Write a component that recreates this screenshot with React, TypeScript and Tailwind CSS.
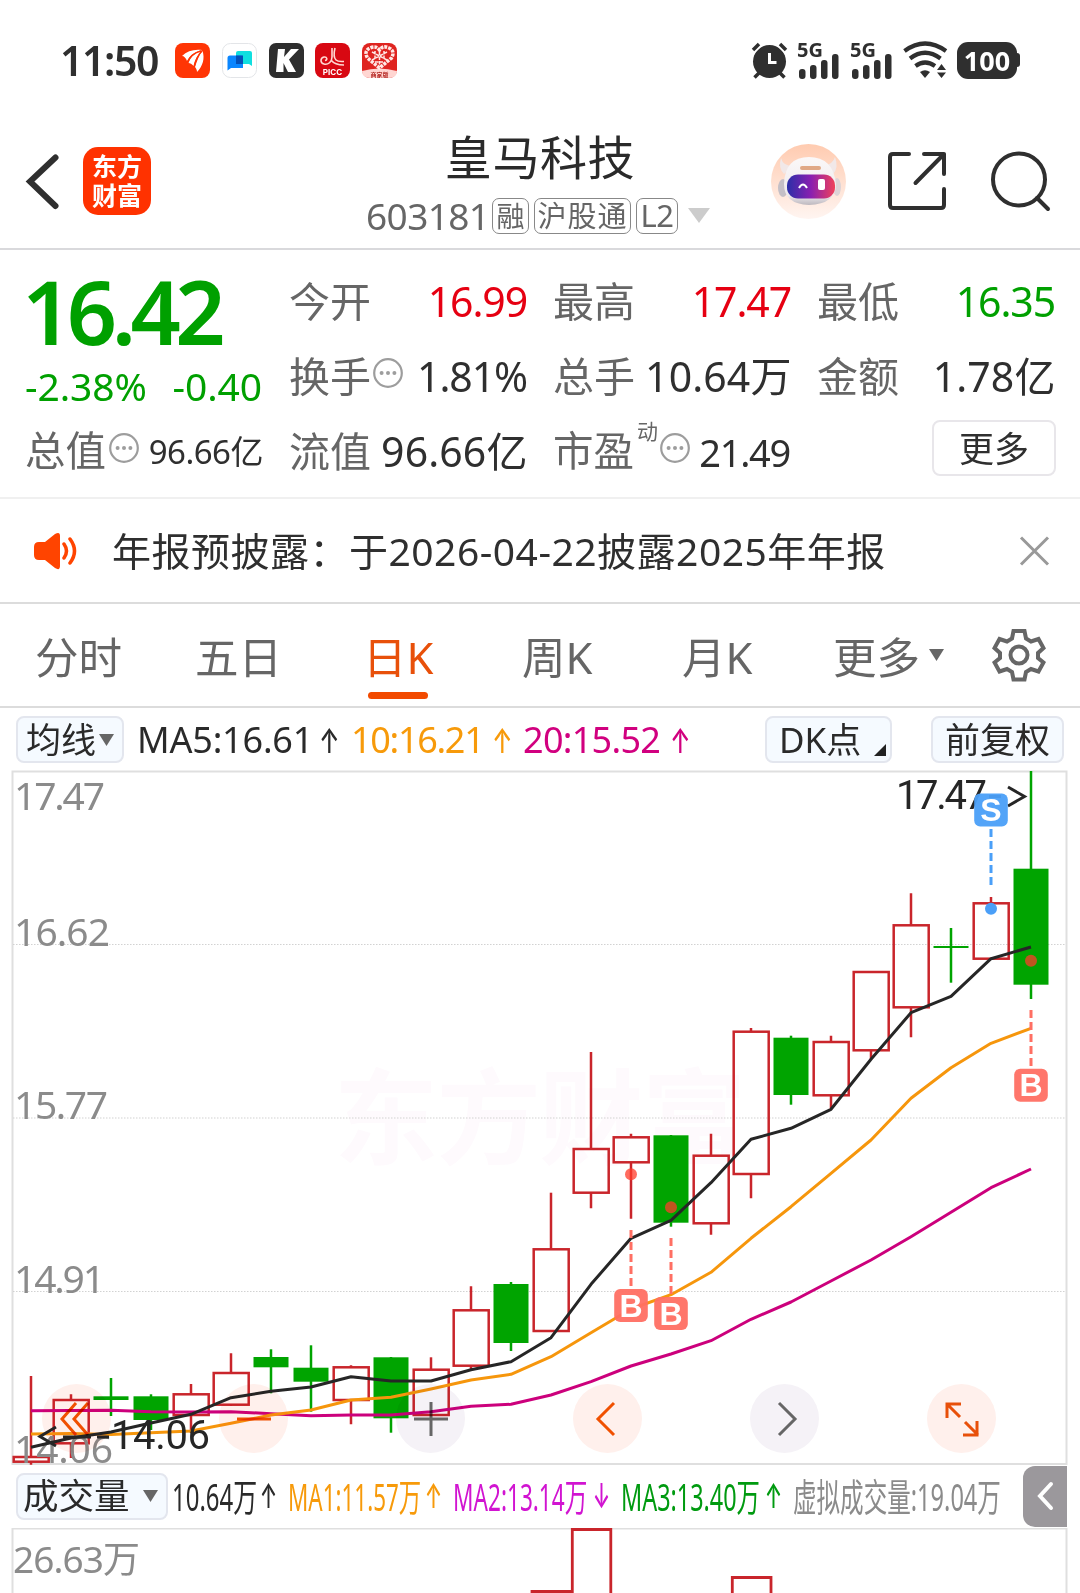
import React from 'react';

type Candle = { up: boolean; high: number; top: number; bottom: number; low: number };

const STEP = 40;
const FIRST_X = 31;

const candles: Candle[] = [
  { up: true, high: 1376, top: 1457, bottom: 1461.7, low: 1464.7 },
  { up: true, high: 1394.3, top: 1400, bottom: 1443.3, low: 1458 },
  { up: false, high: 1378, top: 1396.3, bottom: 1400, low: 1416 },
  { up: false, high: 1394.3, top: 1396.3, bottom: 1420, low: 1430 },
  { up: true, high: 1384, top: 1394.3, bottom: 1415, low: 1433 },
  { up: true, high: 1353.3, top: 1373, bottom: 1404.7, low: 1406 },
  { up: false, high: 1349.3, top: 1357, bottom: 1367.3, low: 1393.3 },
  { up: false, high: 1345.3, top: 1367.7, bottom: 1381.7, low: 1411.7 },
  { up: true, high: 1365.3, top: 1367.3, bottom: 1400, low: 1424.3 },
  { up: false, high: 1357, top: 1357.3, bottom: 1418.3, low: 1432.7 },
  { up: true, high: 1357.3, top: 1369.7, bottom: 1415, low: 1415 },
  { up: true, high: 1286.3, top: 1310.3, bottom: 1365.7, low: 1369 },
  { up: false, high: 1282, top: 1284, bottom: 1343, low: 1351 },
  { up: true, high: 1192.7, top: 1249.3, bottom: 1331, low: 1331 },
  { up: true, high: 1052, top: 1149, bottom: 1192.7, low: 1208.3 },
  { up: true, high: 1133.7, top: 1137.3, bottom: 1162.3, low: 1218.7 },
  { up: false, high: 1135, top: 1135.3, bottom: 1222.7, low: 1226.7 },
  { up: true, high: 1133.7, top: 1155.7, bottom: 1223.3, low: 1234.7 },
  { up: true, high: 1028, top: 1031.7, bottom: 1174, low: 1198.3 },
  { up: false, high: 1035.7, top: 1037.7, bottom: 1095, low: 1104.7 },
  { up: true, high: 1035.7, top: 1042, bottom: 1095.3, low: 1109 },
  { up: true, high: 972, top: 972, bottom: 1050.3, low: 1059 },
  { up: true, high: 893.3, top: 925.3, bottom: 1007.3, low: 1037.3 },
  { up: false, high: 928, top: 946, bottom: 948, low: 982.7 },
  { up: true, high: 897, top: 903.3, bottom: 958.7, low: 960 },
  { up: false, high: 771, top: 868.7, bottom: 984.7, low: 999 },
];

const ma5 = [1447.3, 1438, 1432, 1423, 1414.3, 1397.7, 1391.3, 1387, 1376.7, 1381, 1381, 1369.7, 1361.7, 1337.7, 1284.3, 1238.3, 1220.3, 1182.7, 1139.3, 1128.3, 1109.3, 1059.3, 1012.7, 996.3, 958.7, 947];
const ma10 = [1434, 1433.5, 1434.5, 1432.7, 1431, 1423.3, 1415, 1410, 1400, 1397.3, 1389, 1380, 1374.3, 1356.7, 1332.7, 1309, 1294.7, 1272.3, 1238.3, 1206.7, 1173.3, 1140, 1098.3, 1067.7, 1043.3, 1028.3];
const ma20 = [1410.7, 1410.5, 1410.3, 1411.7, 1412, 1411.7, 1413.7, 1415.7, 1415, 1415, 1411.7, 1406.3, 1404.3, 1395, 1381.7, 1366, 1354, 1340.7, 1319.3, 1302, 1281, 1260, 1236.7, 1212.3, 1187.7, 1169];

const toPoints = (values: number[]) => values.map((v, i) => `${FIRST_X + i * STEP},${v}`).join(' ');

const axisLabels = [
  { text: '17.47', y: 810, width: 91 },
  { text: '16.62', y: 946, width: 96 },
  { text: '15.77', y: 1119, width: 94 },
  { text: '14.91', y: 1293, width: 91 },
  { text: '14.06', y: 1463, width: 99 },
];

const signals = [
  { kind: 'S', x: 991, dot: 908.7, box: 793.5, from: 829, to: 886 },
  { kind: 'B', x: 631, dot: 1174.3, box: 1289, from: 1230, to: 1287 },
  { kind: 'B', x: 671, dot: 1207.3, box: 1297, from: 1238, to: 1295 },
  { kind: 'B', x: 1031, dot: 960.7, box: 1068.7, from: 1010, to: 1066 },
];

function Dots({ className = '' }: { className?: string }) {
  return (
    <svg width="30" height="30" viewBox="0 0 30 30" className={`shrink-0 ${className}`}>
      <circle cx="15" cy="15" r="13.8" fill="none" stroke="#9d9d9d" strokeWidth="2.2" />
      <circle cx="8.6" cy="15" r="2" fill="#9d9d9d" />
      <circle cx="15" cy="15" r="2" fill="#9d9d9d" />
      <circle cx="21.4" cy="15" r="2" fill="#9d9d9d" />
    </svg>
  );
}

function Down({ className = '' }: { className?: string }) {
  return (
    <svg width="15" height="12" viewBox="0 0 15 12" className={`shrink-0 ${className}`}>
      <path d="M0 0H15L7.5 12Z" fill="currentColor" />
    </svg>
  );
}

function SignalBars() {
  return (
    <div className="relative h-[37px] w-[43px]">
      <span className="absolute -top-[1px] left-0 text-[20px] leading-[18px] font-bold">5G</span>
      <svg width="43" height="37" viewBox="0 0 43 37" fill="#2f2f2f">
        <rect x="2" y="27" width="6.5" height="10" rx="3" />
        <rect x="13" y="23" width="6.5" height="14" rx="3" />
        <rect x="24" y="18" width="6.5" height="19" rx="3" />
        <rect x="35" y="12" width="6.5" height="25" rx="3" />
      </svg>
    </div>
  );
}

function StatusBar() {
  return (
    <div className="flex h-[122px] items-center pb-[2px] pl-[60px] text-[#2f2f2f]">
      <span className="w-[115px] text-[41px] leading-none font-semibold tracking-[-1.4px] whitespace-nowrap">11:50</span>
      <div className="flex w-[222px] justify-between">
        <svg width="35" height="35" viewBox="0 0 35 35">
          <rect width="35" height="35" rx="8" fill="#ff3505" />
          <path d="M7 13C12 8 19 6 27 7C20 9 15 12 12 18C11 15 9 13 7 13Z" fill="#fff" />
          <path d="M13.500 20C16 13 21 9 27 7.500C22 13 20 17 18.500 23C17 21 15 20 13.500 20Z" fill="#fff" />
          <path d="M20 24C22 18 24 12 27.500 8C30 15 28 23 22 29C22 27 21 25 20 24Z" fill="#fff" />
          <path d="M12.500 19.500C15 13 20 9.500 26 8M19.200 24C20.500 17 23 12 27 8" stroke="#ff3505" strokeWidth="1.300" fill="none" />
        </svg>
        <svg width="35" height="35" viewBox="0 0 35 35">
          <rect x=".5" y=".5" width="34" height="34" rx="8" fill="#fff" stroke="#e3e5e8" />
          <path d="M16 8H28Q30 8 30 10V23L27 21H14V10Q14 8 16 8Z" fill="#10dfe0" />
          <path d="M8 12.500H19Q21 12.500 21 14.500V25H9L5.500 27.500V15Q5.500 12.500 8 12.500Z" fill="#0a86ff" />
          <rect x="14" y="12.500" width="7" height="8.500" fill="#0450b8" />
        </svg>
        <svg width="35" height="35" viewBox="0 0 35 35">
          <rect width="35" height="35" rx="7" fill="#2e2e2e" />
          <path d="M9 6H16L15 14L22 6H30L20 16.500L27 29H19L14.500 20V29H7Z" fill="#fff" />
        </svg>
        <svg width="35" height="35" viewBox="0 0 35 35">
          <rect width="35" height="35" rx="8" fill="#d80812" />
          <path d="M17 5V14C17 19 13 22 9 21C5 20 5 15 9 14C12 13.500 13 17 10 17.500M20 5C19 9 18 14 21 17C23 19 26 18.500 29 18.500M16 17C19 21 24 22 29 22" stroke="#ffd8d2" strokeWidth="1.600" fill="none" />
          <text x="17.5" y="31.500" textAnchor="middle" fontSize="8" fontWeight="700" fontFamily="Inter, sans-serif" fill="#fff">PICC</text>
        </svg>
        <svg width="35" height="35" viewBox="0 0 35 35">
          <rect width="35" height="35" rx="8" fill="#df2420" />
          <path d="M0 28Q17 23 35 28Q35 35 27 35H8Q0 35 0 28Z" fill="#ffd6d2" />
          <path d="M17.500 25L5.500 15Q1.500 8 8 5Q14 2 17.500 7Q21 2 27 5Q33.500 8 29.500 15Z" fill="none" stroke="#ffe9e6" strokeWidth="3.500" strokeDasharray="3 1" />
          <path d="M10 9L25 17M25 9L10 17M13 19H22M13 8V16M22 8V16M17.500 9V22" stroke="#ffe9e6" strokeWidth="1.500" strokeDasharray="3.500 1" />
          <text x="17.500" y="33.500" textAnchor="middle" fontSize="6" fontWeight="700" fontFamily="'Noto Sans CJK SC', sans-serif" fill="#b52a26">商家版</text>
        </svg>
      </div>
      <div className="ml-[354px] flex items-center">
        <svg width="37" height="37" viewBox="0 0 37 37" fill="#2f2f2f">
          <circle cx="18.500" cy="19.500" r="16.500" />
          <path d="M2 8L8 2M35 8L29 2" stroke="#fff" strokeWidth="7" strokeLinecap="round" />
          <path d="M2 8L8 2M35 8L29 2M8 31L3.500 35.500M29 31L33.500 35.500" stroke="#2f2f2f" strokeWidth="3.500" />
          <path d="M18.500 11V20.500H25.500" stroke="#fff" strokeWidth="3" fill="none" />
        </svg>
        <div className="ml-[9px] flex gap-[10px]">
          <SignalBars />
          <SignalBars />
        </div>
        <svg width="45" height="38" viewBox="0 0 45 38" className="ml-[10px]" fill="none" stroke="#2f2f2f" strokeWidth="4.200">
          <path d="M1.500 10Q22 -5 43 10" />
          <path d="M7 17.500Q22 6 37.500 17.500" />
          <path d="M12.500 25Q22 18 32 25" />
          <path d="M17 31Q22 27.500 27 31L22 37Z" fill="#2f2f2f" stroke="none" />
          <path d="M34 29L38.500 23L43 29ZM34 31.500L38.500 37L43 31.500Z" fill="#2f2f2f" stroke="none" />
        </svg>
        <div className="ml-[9px] flex h-[37px] w-[60px] items-center justify-center rounded-[11px] bg-[#2f2f2f] text-[27px] leading-none font-bold text-white">
          100
        </div>
        <div className="h-[14px] w-[3px] rounded-r-sm bg-[#2f2f2f]" />
      </div>
    </div>
  );
}

function Header() {
  return (
    <header className="grid h-[128px] grid-cols-[366px_348px_1fr] border-b-2 border-[#d9d9dc]">
      <div className="flex items-start pt-[25px] pl-[25px]">
        <svg width="35" height="60" viewBox="0 0 35 60" className="mt-[5px]">
          <path d="M30.500 5.500L5 29.500L30.500 54" fill="none" stroke="#2f2f2f" strokeWidth="6" strokeLinecap="round" />
        </svg>
        <div className="ml-[23px] flex h-[68px] w-[68px] flex-col items-center justify-center rounded-[15px] bg-[#ff3200] text-[25px] leading-[29px] font-bold text-white">
          <span>东方</span>
          <span>财富</span>
        </div>
      </div>
      <div className="flex flex-col items-center">
        <h1 className="mt-[9px] text-[47px] leading-[52px] tracking-[0.6px] text-[#2a2a2a]">皇马科技</h1>
        <div className="mt-[14px] flex w-full items-center text-[#666]">
          <span className="w-[126px] text-[37px] leading-none tracking-[-0.6px] whitespace-nowrap">603181</span>
          <span className="flex h-[36px] w-[37px] shrink-0 items-center justify-center rounded-[7px] border border-[#888] text-[28px] leading-none">融</span>
          <span className="ml-[5px] flex h-[36px] w-[97px] shrink-0 items-center justify-center rounded-[7px] border border-[#888] text-[29px] leading-none tracking-[1px] whitespace-nowrap">沪股通</span>
          <span className="ml-[5px] flex h-[36px] w-[42px] shrink-0 items-center justify-center rounded-[7px] border border-[#888] text-[31px] leading-none tracking-[-0.5px]">L2</span>
          <svg width="22" height="15" viewBox="0 0 22 15" className="ml-[10px]">
            <path d="M0 0H22L11 15Z" fill="#ccc" />
          </svg>
        </div>
      </div>
      <div className="flex items-start pt-[22px] pl-[57px]">
        <svg width="75" height="75" viewBox="0 0 75 75">
          <defs>
            <linearGradient id="halo" x1="0" y1="0" x2="0" y2="1">
              <stop offset="0" stopColor="#ffcbb0" />
              <stop offset="1" stopColor="#fff5f1" />
            </linearGradient>
            <linearGradient id="visor" x1="0" y1="0" x2="1" y2="0">
              <stop offset="0" stopColor="#2b2fa8" />
              <stop offset=".5" stopColor="#8a1fb0" />
              <stop offset="1" stopColor="#f0415a" />
            </linearGradient>
            <linearGradient id="helmet" x1="0" y1="0" x2="0" y2="1">
              <stop offset="0" stopColor="#fbf8f8" />
              <stop offset=".8" stopColor="#eeeaed" />
              <stop offset="1" stopColor="#bdb8bf" />
            </linearGradient>
          </defs>
          <circle cx="37.500" cy="37.500" r="37.500" fill="url(#halo)" />
          <path d="M10 14Q7 24 13 30L22 22Q12 22 10 14ZM64 13Q68 24 62 30L53 22Q62 20 64 13Z" fill="#f1e8e8" />
          <ellipse cx="12" cy="44" rx="5" ry="9" fill="#c4bfc6" />
          <ellipse cx="66" cy="43" rx="4" ry="9" fill="#ddd3d6" />
          <path d="M13 40Q14 13 38 13Q62 13 65 40Q65 60 38 61Q13 60 13 40Z" fill="url(#helmet)" />
          <rect x="16" y="30.500" width="48" height="24" rx="11" fill="url(#visor)" />
          <rect x="29" y="22" width="21" height="4" rx="2" fill="#e0a886" />
          <path d="M28 44Q32 37 36 44" fill="none" stroke="#fff" strokeWidth="2" />
          <rect x="47" y="35" width="7" height="11" rx="2" fill="#fff" />
        </svg>
        <svg width="60" height="60" viewBox="0 0 60 60" className="mt-[7px] ml-[41px]" fill="none" stroke="#2f2f2f" strokeWidth="4" strokeLinecap="round" strokeLinejoin="round">
          <path d="M22 3H6Q3 3 3 6V54Q3 57 6 57H54Q57 57 57 54V38" />
          <path d="M37 3H57V23M57 3L28.500 32" />
        </svg>
        <svg width="62" height="62" viewBox="0 0 62 62" className="mt-[6px] ml-[43px]" fill="none" stroke="#2f2f2f" strokeWidth="4" strokeLinecap="round">
          <circle cx="29" cy="29.500" r="26" />
          <path d="M47 48L58 59" />
        </svg>
      </div>
    </header>
  );
}

function Quote({ label, value, color = 'text-[#2f2f2f]', dots = false }: { label: string; value: string; color?: string; dots?: boolean }) {
  const tracking = /[万亿]/.test(value) ? 'tracking-[0.1px] -mr-[1.5px]' : 'tracking-[-1.1px] -mr-[1px]';
  return (
    <div className="flex items-center justify-between text-[41px] leading-none whitespace-nowrap">
      <span className="flex items-center text-[#666]">
        {label}
        {dots && <Dots className="mb-[8px] ml-[2px]" />}
      </span>
      <span className={`${tracking} ${color}`}>{value}</span>
    </div>
  );
}

function QuotePanel() {
  return (
    <section className="grid h-[249px] grid-cols-[237px_237px_237px_237px] grid-rows-[75px_75px_75px] gap-x-[27px] border-b-2 border-[#f0f0f0] pt-[14px] pl-[25px]">
      <div className="row-span-2 flex flex-col text-[#00a000]">
        <span className="mt-[3px] -ml-[3px] text-[88px] leading-[88px] font-semibold tracking-[-5.500px]">16.42</span>
        <div className="mt-[9px] flex justify-between text-[39px] leading-[44px] tracking-[-0.1px] whitespace-nowrap">
          <span>-2.38%</span>
          <span>-0.40</span>
        </div>
      </div>
      <Quote label="今开" value="16.99" color="text-[#e60012]" />
      <Quote label="最高" value="17.47" color="text-[#e60012]" />
      <Quote label="最低" value="16.35" color="text-[#00a000]" />
      <Quote label="换手" value="1.81%" dots />
      <Quote label="总手" value="10.64万" />
      <Quote label="金额" value="1.78亿" />
      <div className="flex items-center justify-between text-[40.500px] leading-none whitespace-nowrap">
        <span className="flex items-center text-[#666]">
          总值
          <Dots className="mb-[8px] ml-[3px]" />
        </span>
        <span className="-mr-[1px] text-[33px] tracking-[-0.5px] text-[#2f2f2f]">96.66亿</span>
      </div>
      <Quote label="流值" value="96.66亿" />
      <div className="flex items-center justify-between text-[40.500px] leading-none whitespace-nowrap">
        <span className="flex items-center text-[#666]">
          市盈
          <span className="mb-[40px] ml-[3px] text-[21px]">动</span>
          <Dots className="mb-[8px] ml-[2px]" />
        </span>
        <span className="text-[38px] tracking-[-1.3px] text-[#2f2f2f]">21.49</span>
      </div>
      <div className="flex items-center justify-end">
        <button className="-mr-[2px] mb-[7px] h-[56px] w-[124px] rounded-[8px] border-2 border-[#e8e6ea] text-[35px] leading-none text-[#2f2f2f]">更多</button>
      </div>
    </section>
  );
}

function Notice() {
  return (
    <div className="flex h-[105px] items-center border-b-2 border-[#dcdcdc] pl-[33px]">
      <svg width="46" height="38" viewBox="0 0 46 38">
        <path d="M6 10H12L22 2Q27 -1 27 4V34Q27 39 22 36L12 28H6Q1 28 1 23V15Q1 10 6 10Z" fill="#ff4400" />
        <path d="M31 12Q36 19 31 26M37 7Q46 19 37 31" fill="none" stroke="#ff4400" strokeWidth="3.500" strokeLinecap="round" />
      </svg>
      <span className="ml-[33px] w-[907px] text-[39px] leading-none tracking-[0.5px] whitespace-nowrap text-[#2f2f2f]">年报预披露：于2026-04-22披露2025年年报</span>
      <svg width="31" height="30" viewBox="0 0 31 30">
        <path d="M2 1.500L29 28.500M29 1.500L2 28.500" stroke="#999" strokeWidth="3" />
      </svg>
    </div>
  );
}

function Tabs() {
  return (
    <nav className="flex h-[104px] items-center border-b-2 border-[#dcdcdc] pt-[5px] pl-[35px] text-[43.500px] leading-none whitespace-nowrap text-[#666]">
      <span className="w-[160px]">分时</span>
      <span className="w-[168px]">五日</span>
      <span className="relative w-[159px] text-[#e8500a]">
        日K
        <span className="absolute top-[56px] left-[5px] h-[7px] w-[60px] rounded-full bg-[#f24a00]" />
      </span>
      <span className="w-[160px]">周K</span>
      <span className="w-[151px]">月K</span>
      <span className="w-[96px]">更多</span>
      <Down className="mb-[5px]" />
      <svg width="54" height="54" viewBox="0 0 54 54" className="mb-[5px] ml-[48px]" fill="none" stroke="#666" strokeWidth="4">
        <path d="M21.500 3H32.500L34 10.500L39 13.500L46.500 11L51.500 20L46 25V30L51.500 34.500L46.500 43.500L39 41L34 44L32.500 51.500H21.500L20 44L15 41L7.500 43.500L2.500 34.500L8 30V25L2.500 20L7.500 11L15 13.500L20 10.500Z" />
        <circle cx="27" cy="27" r="8.500" />
      </svg>
    </nav>
  );
}

const chip = 'flex items-center rounded-[8px] border-2 border-[#e3e6ee] bg-[#f5faff] text-[#2a2a2a]';

function TrendArrow({ className }: { className: string }) {
  return <span className={`origin-left scale-x-80 scale-y-115 text-[30px] font-medium font-[Inter,sans-serif] ${className}`}>↑</span>;
}

function AverageBar() {
  return (
    <div className="flex h-[63px] items-center pl-[16px] text-[36px] leading-none whitespace-nowrap">
      <div className={`${chip} h-[47px] w-[108px] justify-center gap-[3px] text-[35px]`}>
        均线
        <Down className="text-[#666]" />
      </div>
      <span className="ml-[13px] w-[182px] tracking-[-0.2px] text-[#2a2a2a]">MA5:16.61</span>
      <TrendArrow className="w-[32px] text-[#2a2a2a]" />
      <span className="w-[141px] tracking-[-1.3px] text-[#f79a0a]">10:16.21</span>
      <TrendArrow className="w-[31px] text-[#f79a0a]" />
      <span className="w-[147px] tracking-[-0.7px] text-[#d1007f]">20:15.52</span>
      <TrendArrow className="w-[95px] text-[#d1007f]" />
      <div className={`${chip} h-[47px] w-[127px] justify-between pr-[4px] pl-[12px] text-[35px]`}>
        DK点
        <svg width="12" height="12" viewBox="0 0 11 11" className="mt-[20px]">
          <path d="M11 0V11H0Z" fill="#222" />
        </svg>
      </div>
      <div className={`${chip} ml-[39px] h-[47px] w-[133px] justify-center text-[35px]`}>前复权</div>
    </div>
  );
}

function RoundButton({ tone, children }: { tone: string; children: React.ReactNode }) {
  return (
    <button className={`flex h-[69px] w-[69px] items-center justify-center rounded-full mix-blend-multiply ${tone}`}>
      <svg width="40" height="40" viewBox="0 0 40 40" fill="none" stroke="currentColor" strokeWidth="3">
        {children}
      </svg>
    </button>
  );
}

function KLineChart() {
  return (
    <div className="relative h-[693px]">
      <svg width="1080" height="694" viewBox="0 771 1080 694" className="block overflow-visible">
        <g fontFamily="'Noto Sans CJK SC', sans-serif" fontWeight="700" fontSize="104" fill="#fefafd">
          <text x="334" y="1157" textLength="412">东方财富</text>
        </g>
        <rect x="12.500" y="771.500" width="1054" height="692.500" fill="none" stroke="#dfdfdf" strokeWidth="2" />
        {[944.5, 1118, 1291.5].map((y) => (
          <path key={y} d={`M13 ${y}H1066`} stroke="#d2d2d2" strokeWidth="1.200" strokeDasharray="1.500 1.500" />
        ))}
        {candles.map((c, i) => {
          const x = FIRST_X + i * STEP;
          if (!c.up) {
            return (
              <g key={i} fill="#00a400">
                <rect x={x - 1.25} y={c.high} width="2.500" height={c.low - c.high} />
                <rect x={x - 17.5} y={c.top} width="35" height={c.bottom - c.top} />
              </g>
            );
          }
          const left = Math.max(x - 17.3, 13.5);
          return (
            <g key={i} fill="none" stroke="#c9252b" strokeWidth="2.500">
              <path d={`M${x} ${c.high}V${c.top}M${x} ${c.bottom}V${c.low}`} />
              <rect x={left} y={c.top} width={x + 17.7 - left} height={c.bottom - c.top} />
            </g>
          );
        })}
        <g fontFamily="'Noto Sans', sans-serif" fontSize="39" fill="#8b8b8b">
          {axisLabels.map((l) => (
            <text key={l.text} x="14" y={l.y} textLength={l.width}>{l.text}</text>
          ))}
        </g>
        <g fill="none" strokeWidth="3" strokeLinejoin="round">
          <polyline points={toPoints(ma20)} stroke="#cc007c" />
          <polyline points={toPoints(ma10)} stroke="#f6960c" />
          <polyline points={toPoints(ma5)} stroke="#262626" />
        </g>
        <g fontFamily="Roboto, sans-serif" fontSize="40" fill="#262626">
          <path d="M56 1427L40 1436.500L56 1446M63 1437H91M97 1437H109" fill="none" stroke="#262626" strokeWidth="3" />
          <text x="111" y="1448.500" textLength="99">14.06</text>
          <text x="896" y="809" textLength="91">17.47</text>
          <path d="M989 796.500H1001M1008 787L1024.500 796.500L1008 806" fill="none" stroke="#262626" strokeWidth="3" />
        </g>
        {signals.map((s) => {
          const color = s.kind === 'S' ? '#4a9ff8' : '#ff6f63';
          return (
            <g key={s.x}>
              <path d={`M${s.x} ${s.from}V${s.to}`} stroke={color} strokeWidth="3" strokeDasharray="8 4" />
              <circle cx={s.x} cy={s.dot} r="6" fill={s.kind === 'S' ? '#4a9ff8' : '#ff3b2a'} fillOpacity={s.kind === 'S' ? 1 : 0.75} />
              <rect x={s.x - 16.8} y={s.box} width="33.600" height="33" rx="6" fill={color} fillOpacity="0.95" />
              <text x={s.x} y={s.box + 27.5} textAnchor="middle" fontFamily="'Liberation Sans', sans-serif" fontSize="32" fontWeight="700" fill="#fff">{s.kind}</text>
            </g>
          );
        })}
      </svg>
      <div className="absolute top-[613px] left-[42px] flex gap-[108px]">
        <RoundButton tone="bg-[#fff0ec] text-[#f05000]">
          <path d="M19 4L5 20L19 36M31 4L17 20L31 36" />
        </RoundButton>
        <RoundButton tone="bg-[#fff0ec] text-[#f05000]">
          <path d="M3 20H37" />
        </RoundButton>
        <RoundButton tone="bg-[#f5f2f7] text-[#666]">
          <path d="M3 20H37M20 3V37" />
        </RoundButton>
        <RoundButton tone="bg-[#fff0ec] text-[#f05000]">
          <path d="M26 4L10 20L26 36" />
        </RoundButton>
        <RoundButton tone="bg-[#f5f2f7] text-[#666]">
          <path d="M14 4L30 20L14 36" />
        </RoundButton>
        <RoundButton tone="bg-[#fff0ec] text-[#e8500a]">
          <path d="M5 19V5H19M5 5L18 18M35 22V36H21M36 36L23 23" />
        </RoundButton>
      </div>
    </div>
  );
}

function VolumeItem({ text, arrow, className, scale }: { text: string; arrow?: string; className: string; scale: string }) {
  return (
    <div className={`flex shrink-0 items-center ${className}`}>
      <span className={`w-0 origin-left text-[38px] ${scale}`}>{text}</span>
      {arrow && <span className="ml-auto scale-x-60 text-[34px] font-medium font-[Inter,sans-serif]">{arrow}</span>}
    </div>
  );
}

function VolumeBar() {
  return (
    <div className="flex h-[64px] items-center pl-[16px] leading-none whitespace-nowrap">
      <div className={`${chip} h-[47px] w-[152px] shrink-0 justify-between pr-[8px] pl-[5px] text-[35.500px]`}>
        成交量
        <Down className="text-[#666]" />
      </div>
      <VolumeItem text="10.64万" arrow="↑" scale="scale-x-[0.63]" className="ml-[4px] w-[111px] text-[#2a2a2a]" />
      <VolumeItem text="MA1:11.57万" arrow="↑" scale="scale-x-[0.59]" className="ml-[5px] w-[160px] text-[#f79a0a]" />
      <VolumeItem text="MA2:13.14万" arrow="↓" scale="scale-x-[0.595]" className="ml-[5px] w-[163px] text-[#d114d1]" />
      <VolumeItem text="MA3:13.40万" arrow="↑" scale="scale-x-[0.615]" className="ml-[5px] w-[167px] text-[#009a10]" />
      <VolumeItem text="虚拟成交量:19.04万" scale="scale-x-[0.62]" className="ml-[5px] w-[230px] text-[#8b8b8b]" />
      <div className="flex h-[61px] w-[44px] shrink-0 items-center justify-center rounded-l-[12px] bg-[#9b989c]">
        <svg width="18" height="30" viewBox="0 0 18 30">
          <path d="M15 3L4 15L15 27" fill="none" stroke="#fff" strokeWidth="4" strokeLinecap="round" />
        </svg>
      </div>
    </div>
  );
}

function VolumeChart() {
  return (
    <svg width="1080" height="65" viewBox="0 1528 1080 65" className="block">
      <path d="M12.500 1593V1528.500H1066.500V1593" fill="none" stroke="#dfdfdf" strokeWidth="2" />
      <text x="13" y="1573" textLength="127" fontFamily="'Noto Sans', 'Noto Sans CJK SC', sans-serif" fontSize="37" fill="#8b8b8b">26.63万</text>
      <g fill="none" stroke="#c9252b" strokeWidth="2.800">
        <path d="M532 1593V1591.500H572" />
        <path d="M572.300 1593V1529.500H610.800V1593" />
        <path d="M732.300 1593V1577.500H771V1593" />
      </g>
    </svg>
  );
}

export default function App() {
  return (
    <main className="h-[1593px] w-[1080px] overflow-hidden bg-white font-['Noto_Sans','Noto_Sans_CJK_SC',sans-serif]">
      <StatusBar />
      <Header />
      <QuotePanel />
      <Notice />
      <Tabs />
      <AverageBar />
      <KLineChart />
      <VolumeBar />
      <VolumeChart />
    </main>
  );
}
